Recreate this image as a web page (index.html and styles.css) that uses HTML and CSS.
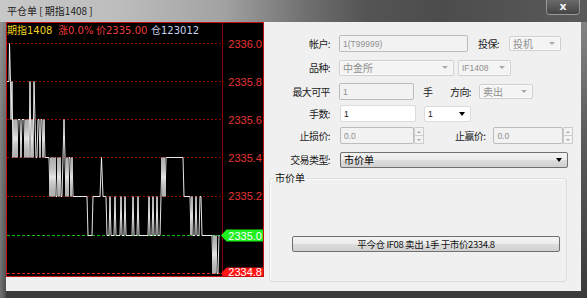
FILE: index.html
```html
<!DOCTYPE html>
<html lang="zh-CN">
<head>
<meta charset="utf-8">
<title>平仓单</title>
<link rel="stylesheet" href="styles.css">
</head>
<body>
<div class="window">
  <div class="titlebar">
    <span class="title">平仓单 [ 期指1408 ]</span>
    <span class="close">x</span>
  </div>
  <div class="client">
    <div class="chart">
      <svg class="chart-svg" width="256" height="253" viewBox="7 23 256 253" xmlns="http://www.w3.org/2000/svg">
        <g class="grid" stroke="#8a0000" stroke-dasharray="2 2" stroke-width="1">
          <line x1="7" y1="43.5" x2="222" y2="43.5"/>
          <line x1="7" y1="81.5" x2="222" y2="81.5"/>
          <line x1="7" y1="119.5" x2="222" y2="119.5"/>
          <line x1="7" y1="157.5" x2="222" y2="157.5"/>
          <line x1="7" y1="196.5" x2="222" y2="196.5"/>
        </g>
        <line x1="7" y1="235.5" x2="222" y2="235.5" stroke="#10c010" stroke-dasharray="3 2"/>
        <line x1="7" y1="273.5" x2="222" y2="273.5" stroke="#ff2020" stroke-dasharray="3 2"/>
        <line x1="222.5" y1="23" x2="222.5" y2="276" stroke="#8a0000"/>
        <polyline fill="none" stroke="#ffffff" stroke-width="0.9" points="7,81.5 9,81.5 9.5,43.5 10.5,81.5 11,119.5 12,81.5 13,157.5 14,119.5 15,157.5 16,119.5 17,157.5 18,119.5 20,119.5 21,157.5 22,119.5 24,119.5 25,157.5 26,119.5 27,157.5 28,119.5 29,157.5 30,81.5 31,157.5 32,119.5 33,157.5 34,81.5 35,119.5 36,157.5 37,157.5 38,119.5 39,119.5 40,157.5 41,119.5 42,119.5 43,157.5 44,119.5 45,157.5 49,157.5 50,196.5 51,157.5 52,196.5 53,157.5 54,196.5 55,157.5 56,196.5 57,196.5 58,157.5 59,196.5 60,157.5 61,196.5 62,196.5 63,157.5 64,119.5 65,157.5 66,196.5 67,157.5 68,196.5 69,157.5 70,157.5 71,196.5 72,157.5 73,196.5 75,196.5 87,196.5 88,235.5 92,235.5 93,196.5 100,196.5 101.5,157.5 103,196.5 106,196.5 107,235.5 109,235.5 110,196.5 111,235.5 114,235.5 115,196.5 116,235.5 120,235.5 121,196.5 122,235.5 124,235.5 125,196.5 126,235.5 132,235.5 133,196.5 134,235.5 137,235.5 138,196.5 139,235.5 148,235.5 149,196.5 150,235.5 152,235.5 153,196.5 154,235.5 156,235.5 157,196.5 158,235.5 160,235.5 161,196.5 162,157.5 163,196.5 164,157.5 165,196.5 166,157.5 183,157.5 184,196.5 190,196.5 191,235.5 192,196.5 193,235.5 195,235.5 196,196.5 197,235.5 199,235.5 200,196.5 201,196.5 202,235.5 212,235.5 213,273.5 214,235.5 215,273.5 216,235.5 217,273.5 218,273.5 219,235.5"/>
        <g class="axis-labels">
          <text x="262" y="47.5">2336.0</text>
          <text x="262" y="85.5">2335.8</text>
          <text x="262" y="123.5">2335.6</text>
          <text x="262" y="161.5">2335.4</text>
          <text x="262" y="200">2335.2</text>
        </g>
        <polygon points="221,235.5 226.5,229.5 264,229.5 264,241.5 226.5,241.5" fill="#1ef01e"/>
        <text class="tag-text" x="262" y="239.5">2335.0</text>
        <polygon points="221,273.5 226.5,267.5 264,267.5 264,280 226.5,280" fill="#ff1414"/>
        <text class="tag-text" x="262" y="275.5">2334.8</text>
        <g class="head">
          <text x="7" y="34" class="h-yellow">期指1408</text>
          <text x="58" y="34" class="h-red">涨0.0%</text>
          <text x="96" y="34" class="h-red">价2335.00</text>
          <text x="151" y="34" class="h-blue">仓123012</text>
        </g>
      </svg>
    </div>
    <div class="form">
      <div class="row r1">
        <span class="lbl">帐户:</span>
        <span class="field dis w129 latin">1(T99999)</span>
        <span class="lbl2 ml10">投保:</span>
        <span class="sel dis w52 h15">投机<i class="arr grey"></i></span>
      </div>
      <div class="row r2">
        <span class="lbl">品种:</span>
        <span class="sel dis w115">中金所<i class="arr grey"></i></span>
        <span class="sel dis w53 ml4 latin">IF1408<i class="arr grey"></i></span>
      </div>
      <div class="row r3">
        <span class="lbl">最大可平</span>
        <span class="field dis w75 latin">1</span>
        <span class="unit">手</span>
        <span class="lbl2 ml17">方向:</span>
        <span class="sel dis w54 h15">卖出<i class="arr grey"></i></span>
      </div>
      <div class="row r4">
        <span class="lbl">手数:</span>
        <span class="field white w76 ml1 latin dark">1</span>
        <span class="sel white w47 ml8 latin dark">1<i class="arr black"></i></span>
      </div>
      <div class="row r5">
        <span class="lbl">止损价:</span>
        <span class="field dis w74 ml1 latin">0.0</span>
        <span class="spin"><i class="sb"><b class="up"></b></i><i class="sb"><b class="dn"></b></i></span>
        <span class="lbl2 ml31">止赢价:</span>
        <span class="field dis w70 ml8 latin">0.0</span>
        <span class="spin"><i class="sb"><b class="up"></b></i><i class="sb"><b class="dn"></b></i></span>
      </div>
      <div class="row r6">
        <span class="lbl">交易类型:</span>
        <span class="sel btnlike w228 ml1">市价单<i class="arr black"></i></span>
      </div>
      <fieldset class="group">
        <legend>市价单</legend>
        <button class="action" type="button">平今仓 IF08 卖出 1手 于市价2334.8</button>
      </fieldset>
    </div>
  </div>
</div>
</body>
</html>
```
FILE: styles.css
```css
* { box-sizing: border-box; }
html, body { margin: 0; padding: 0; }
body {
  width: 587px;
  height: 298px;
  overflow: hidden;
  font-family: "Noto Sans CJK SC", "Liberation Sans", sans-serif;
  background:
    linear-gradient(to right, rgba(160,160,160,0.55) 0, rgba(120,120,120,0.3) 6px, transparent 6px),
    linear-gradient(to bottom, #8c8c8c 0%, #5c5c5c 45%, #3a3a3a 100%);
}
.window {
  display: flex;
  flex-direction: column;
  width: 587px;
  height: 298px;
}
.titlebar {
  height: 22px;
  display: flex;
  align-items: flex-start;
  background: linear-gradient(to right, #c8c8c8 0%, #bdbdbd 20%, #a2a2a2 38%, #707070 52%, #555 62%, #4c4c4c 75%, #5a5a5a 100%);
}
.title {
  padding-left: 7px;
  line-height: 22px;
  font-size: 10px;
  color: #1a1a1a;
}
.close {
  margin-left: auto;
  margin-right: 7px;
  width: 34px;
  height: 15px;
  border: 1px solid rgba(220,220,220,0.45);
  border-top: none;
  border-radius: 0 0 4px 4px;
  background: linear-gradient(#6a6a6a, #454545);
  color: #f4f4f4;
  font: bold 11px/13px "DejaVu Sans", sans-serif;
  text-align: center;
}
.client {
  display: flex;
  margin: 0 6px;
  height: 269px;
  background: #f0f0f0;
}
.chart {
  width: 258px;
  height: 255px;
  border: 1px solid #c41010;
  background: #000;
}
.chart-svg { display: block; }
.axis-labels text {
  font: 11px "Liberation Sans", sans-serif;
  fill: #e53434;
  text-anchor: end;
}
.tag-text {
  font: 11px "Liberation Sans", sans-serif;
  fill: #ffffff;
  text-anchor: end;
}
.head text {
  font: 10px "DejaVu Sans", "Noto Sans CJK SC", sans-serif;
}
.h-yellow { fill: #f0d21e; }
.h-red { fill: #ec3c3c; }
.h-blue { fill: #c8d2ee; }

/* form */
.form {
  flex: 1;
  padding: 13px 0 0 5px;
  font-size: 10px;
  color: #1a1a1a;
}
.row {
  display: flex;
  align-items: center;
  height: 17px;
}
.r2, .r3 { margin-top: 7px; }
.r4, .r5 { margin-top: 5px; }
.r6 { margin-top: 7px; }
.lbl {
  width: 61px;
  margin-right: 9px;
  text-align: right;
  line-height: 12px;
  letter-spacing: -0.6px;
  white-space: nowrap;
}
.lbl2 {
  line-height: 12px;
  letter-spacing: -0.6px;
  white-space: nowrap;
}
.unit { margin-left: 9px; line-height: 12px; }
.ml1 { margin-left: 1px; }
.ml4 { margin-left: 4px; }
.ml8 { margin-left: 8px; }
.ml10 { margin-left: 10px; margin-right: 10px; }
.ml17 { margin-left: 17px; margin-right: 8px; }
.ml31 { margin-left: 31px; }
.w47 { width: 47px; }
.w52 { width: 52px; }
.w53 { width: 53px; }
.w54 { width: 54px; }
.w70 { width: 70px; }
.w74 { width: 74px; }
.w75 { width: 75px; }
.w76 { width: 76px; }
.w115 { width: 115px; }
.w129 { width: 129px; }
.w228 { width: 228px; }

.field, .sel {
  display: flex;
  align-items: center;
  height: 17px;
  padding-left: 3px;
  border: 1px solid #bcbcbc;
  border-radius: 2px;
  font-size: 10px;
  line-height: 12px;
  white-space: nowrap;
}
.sel { height: 16px; }
.h15 { height: 15px; }
.latin { font: 8.5px "Liberation Sans", sans-serif; }
.dis { background: #f2f2f2; color: #909090; }
.sel.dis { border-color: #cfcfcf; background: #f4f4f4; box-shadow: inset 0 0 0 1px #fafafa; }
.white { background: #fff; border-color: #dcdcdc; }
.dark { color: #111; }
.arr {
  margin-left: auto;
  margin-right: 5px;
  width: 0;
  height: 0;
  border-left: 3px solid transparent;
  border-right: 3px solid transparent;
  border-top: 3px solid #a8a8a8;
}
.arr.black {
  border-left-width: 3.5px;
  border-right-width: 3.5px;
  border-top: 4px solid #000;
}
.btnlike {
  border: 1px solid #707070;
  border-radius: 2px;
  background: linear-gradient(#f3f3f3 0%, #ebebeb 50%, #dddddd 50%, #d0d0d0 100%);
  color: #000;
}
.spin {
  display: flex;
  flex-direction: column;
  width: 10px;
  height: 17px;
}
.sb {
  flex: 1;
  display: flex;
  align-items: center;
  justify-content: center;
  border: 1px solid #cdcdcd;
  background: #f2f2f2;
}
.sb + .sb { border-top: none; }
.up, .dn {
  width: 0;
  height: 0;
  border-left: 2px solid transparent;
  border-right: 2px solid transparent;
}
.up { border-bottom: 2px solid #aaa; }
.dn { border-top: 2px solid #aaa; }

.group {
  margin: 4px 0 0 0;
  width: 298px;
  height: 110px;
  padding: 0;
  border: 1px solid #dcdcdc;
  border-radius: 3px;
  box-shadow: inset 1px 1px 0 #fbfbfb;
}
.group legend {
  margin-left: 4px;
  padding: 0 1px;
  font-size: 10px;
  line-height: 12px;
  color: #111;
}
.action {
  display: block;
  margin: 52px 0 0 22px;
  width: 268px;
  height: 16px;
  padding: 0;
  border: 1px solid #707070;
  border-radius: 2px;
  background: linear-gradient(#f3f3f3 0%, #ebebeb 50%, #dddddd 50%, #d0d0d0 100%);
  font-family: "Noto Sans CJK SC", "Liberation Sans", sans-serif;
  font-size: 9.5px;
  line-height: 12px;
  color: #111;
  letter-spacing: -0.4px;
}
```
